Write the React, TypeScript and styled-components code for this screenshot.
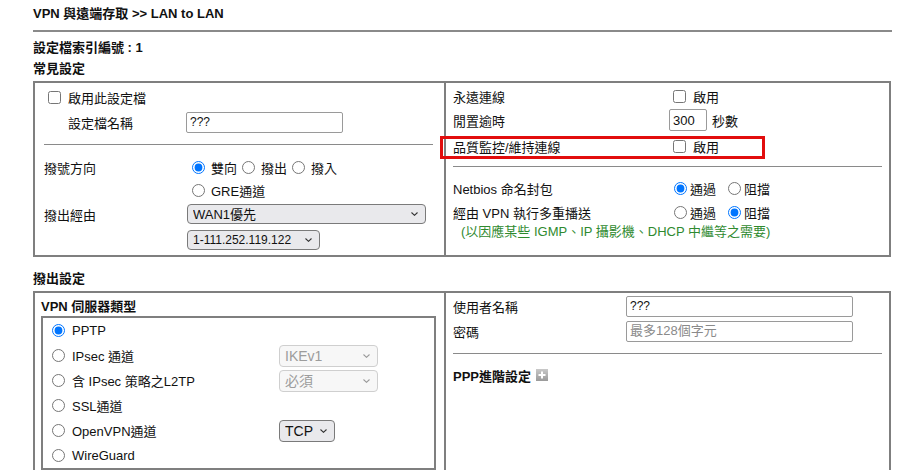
import React from 'react'
import styled, { createGlobalStyle } from 'styled-components'

const GlobalStyle = createGlobalStyle`
  body {
    margin: 0;
    background: #fff;
    color: #111;
    font-family: 'Liberation Sans', 'Noto Sans CJK TC', sans-serif;
    font-size: 13px;
  }
  * {
    box-sizing: border-box;
  }
`

const Page = styled.div`
  padding-left: 33px;
  width: 893px;
`
const Title = styled.div`
  height: 28px;
  line-height: 28px;
  font-weight: bold;
`
const Rule = styled.div`
  margin-top: 2px;
  height: 2px;
  background: #8a8a8a;
  width: 859px;
`
const SectionLabel = styled.div<{ $top: number }>`
  margin-top: ${({ $top }) => $top}px;
  height: 20px;
  line-height: 20px;
  font-weight: bold;
`
const Panel = styled.div`
  margin-top: 2px;
  display: grid;
  grid-template-columns: 411px 1fr;
  width: 858px;
  border: 2px solid #7f7f7f;
`
const Cell = styled.div<{ $pad: string; $divider?: boolean }>`
  padding: ${({ $pad }) => $pad};
  border-right: ${({ $divider }) => ($divider ? '2px solid #7f7f7f' : 'none')};
  display: flex;
  flex-direction: column;
`
const Row = styled.div<{ $cols?: string; $h?: number; $top?: number; $indent?: number }>`
  display: grid;
  grid-template-columns: ${({ $cols }) => $cols || '1fr'};
  align-items: center;
  height: ${({ $h }) => $h || 22}px;
  margin-top: ${({ $top }) => $top || 0}px;
  padding-left: ${({ $indent }) => $indent || 0}px;
  position: relative;
`
const Inline = styled.div`
  display: flex;
  align-items: center;
  white-space: nowrap;
`
const Divider = styled.div<{ $top: number; $bottom: number }>`
  height: 1px;
  background: #8a8a8a;
  margin: ${({ $top, $bottom }) => `${$top}px 0 ${$bottom}px`};
`
const Check = styled.input.attrs({ type: 'checkbox' })`
  width: 13px;
  height: 13px;
  margin: 0 7px 0 4px;
`
const Radio = styled.input.attrs({ type: 'radio' })<{ $gap?: number }>`
  width: 13px;
  height: 13px;
  margin: 0 ${({ $gap }) => ($gap ?? 6)}px 0 5px;
`
const TextBox = styled.input<{ $w: number }>`
  width: ${({ $w }) => $w}px;
  height: 21px;
  border: 1px solid #9a9a9a;
  border-radius: 2px;
  padding: 0 3px;
  font: inherit;
  font-size: 12px;
  color: #111;
  &::placeholder {
    color: #8a8a8a;
    font-size: 13px;
  }
`
const SelectWrap = styled.div<{ $w: number }>`
  position: relative;
  width: ${({ $w }) => $w}px;
`
const Select = styled.select<{ $h?: number; $fs?: number; $off?: boolean }>`
  appearance: none;
  -webkit-appearance: none;
  display: block;
  width: 100%;
  height: ${({ $h }) => $h || 20}px;
  font: inherit;
  font-size: ${({ $fs }) => $fs || 13}px;
  padding: 0 18px 0 5px;
  border: 1px solid ${({ $off }) => ($off ? '#cfcfcf' : '#7a7a7a')};
  border-radius: 4px;
  background: ${({ $off }) => ($off ? '#f7f7f7' : '#e9e9ec')};
  color: ${({ $off }) => ($off ? '#9c9c9c' : '#111')};
  opacity: 1;
`
const Chevron = styled.svg`
  position: absolute;
  right: 8px;
  top: 50%;
  margin-top: -2px;
  pointer-events: none;
`
const Note = styled.div`
  height: 18px;
  line-height: 18px;
  padding-left: 8px;
  color: #2f8a2f;
`
const Highlight = styled.div`
  position: absolute;
  left: -13px;
  top: 1px;
  width: 325px;
  height: 23px;
  border: 3px solid #e20d0d;
  pointer-events: none;
`
const TypeBox = styled.div`
  margin-top: 1px;
  border: 2px solid #7f7f7f;
  padding: 0 0 0 4px;
`
const Bold = styled.span`
  font-weight: bold;
`
const Opt = styled.span<{ $gap?: number }>`
  margin-right: ${({ $gap }) => $gap ?? 0}px;
`

const Dropdown = ({
  w,
  value,
  h,
  fs,
  off,
}: {
  w: number
  value: string
  h?: number
  fs?: number
  off?: boolean
}) => (
  <SelectWrap $w={w}>
    <Select $h={h} $fs={fs} $off={off} disabled={off} defaultValue={value}>
      <option>{value}</option>
    </Select>
    <Chevron width="7" height="4" viewBox="0 0 7 4">
      <path d="M0.5 0.5L3.5 3.3L6.5 0.5" fill="none" stroke={off ? '#9a9a9a' : '#333'} strokeWidth="1.1" />
    </Chevron>
  </SelectWrap>
)

const PlusIcon = () => (
  <svg width="12" height="12" viewBox="0 0 12 12" style={{ marginLeft: 5 }}>
    <defs>
      <linearGradient id="pg" x1="0" y1="0" x2="0" y2="1">
        <stop offset="0" stopColor="#c9c9c9" />
        <stop offset="1" stopColor="#9a9a9a" />
      </linearGradient>
    </defs>
    <rect x="0" y="0" width="12" height="12" fill="url(#pg)" />
    <path d="M6 2.5v7M2.5 6h7" stroke="#fff" strokeWidth="2" />
  </svg>
)

const vpnTypes = [
  { label: 'PPTP', checked: true },
  { label: 'IPsec 通道', select: 'IKEv1', w: 99, off: true },
  { label: '含 IPsec 策略之L2TP', select: '必須', w: 99, off: true },
  { label: 'SSL通道' },
  { label: 'OpenVPN通道', select: 'TCP', w: 56 },
  { label: 'WireGuard' },
]

export default function App() {
  return (
    <Page>
      <GlobalStyle />
      <Title>VPN 與遠端存取 &gt;&gt; LAN to LAN</Title>
      <Rule />
      <SectionLabel $top={6}>設定檔索引編號 : 1</SectionLabel>
      <SectionLabel $top={1}>常見設定</SectionLabel>
      <Panel>
        <Cell $pad="3px 11px 4px 9px" $divider>
          <Row>
            <Inline>
              <Check />
              <span>啟用此設定檔</span>
            </Inline>
          </Row>
          <Row $cols="118px 1fr" $h={24} $top={2} $indent={24}>
            <span>設定檔名稱</span>
            <TextBox $w={157} defaultValue="???" />
          </Row>
          <Divider $top={10} $bottom={11} />
          <Row $cols="143px 1fr">
            <span>撥號方向</span>
            <Inline>
              <Radio name="dir" defaultChecked />
              <Opt>雙向</Opt>
              <Radio name="dir" />
              <Opt>撥出</Opt>
              <Radio name="dir" />
              <Opt>撥入</Opt>
            </Inline>
          </Row>
          <Row $cols="143px 1fr" $top={1}>
            <span />
            <Inline>
              <Radio name="dir" />
              <Opt>GRE通道</Opt>
            </Inline>
          </Row>
          <Row $cols="143px 1fr" $top={2}>
            <span>撥出經由</span>
            <Dropdown w={239} value="WAN1優先" />
          </Row>
          <Row $cols="143px 1fr" $top={4}>
            <span />
            <Dropdown w={133} value="1-111.252.119.122" fs={12} />
          </Row>
        </Cell>
        <Cell $pad="2px 7px 0 7px">
          <Row $cols="216px 1fr">
            <span>永遠連線</span>
            <Inline>
              <Check />
              <span>啟用</span>
            </Inline>
          </Row>
          <Row $cols="216px 1fr" $top={2}>
            <span>閒置逾時</span>
            <Inline>
              <TextBox $w={38} defaultValue="300" style={{ height: 22, fontSize: 13 }} />
              <span style={{ marginLeft: 5 }}>秒數</span>
            </Inline>
          </Row>
          <Row $cols="216px 1fr" $top={4}>
            <span>品質監控/維持連線</span>
            <Inline>
              <Check />
              <span>啟用</span>
            </Inline>
            <Highlight />
          </Row>
          <Divider $top={9} $bottom={10} />
          <Row $cols="216px 1fr">
            <span>Netbios 命名封包</span>
            <Inline>
              <Radio name="nb" defaultChecked $gap={3} />
              <Opt $gap={7}>通過</Opt>
              <Radio name="nb" $gap={3} />
              <Opt>阻擋</Opt>
            </Inline>
          </Row>
          <Row $cols="216px 1fr" $top={2}>
            <span>經由 VPN 執行多重播送</span>
            <Inline>
              <Radio name="mc" $gap={3} />
              <Opt $gap={7}>通過</Opt>
              <Radio name="mc" defaultChecked $gap={3} />
              <Opt>阻擋</Opt>
            </Inline>
          </Row>
          <Note>(以因應某些 IGMP、IP 攝影機、DHCP 中繼等之需要)</Note>
        </Cell>
      </Panel>
      <SectionLabel $top={12}>撥出設定</SectionLabel>
      <Panel>
        <Cell $pad="2px 8px 40px 6px" $divider>
          <Row $h={20}>
            <Bold>VPN 伺服器類型</Bold>
          </Row>
          <TypeBox>
            {vpnTypes.map((t) => (
              <Row key={t.label} $cols="232px 1fr" $h={25}>
                <Inline>
                  <Radio name="vpn" defaultChecked={t.checked} $gap={7} />
                  <span>{t.label}</span>
                </Inline>
                {t.select ? <Dropdown w={t.w!} value={t.select} h={22} fs={14} off={t.off} /> : <span />}
              </Row>
            ))}
          </TypeBox>
        </Cell>
        <Cell $pad="2px 7px 0 7px">
          <Row $cols="173px 1fr">
            <span>使用者名稱</span>
            <TextBox $w={227} defaultValue="???" />
          </Row>
          <Row $cols="173px 1fr" $top={3}>
            <span>密碼</span>
            <TextBox $w={227} type="password" placeholder="最多128個字元" />
          </Row>
          <Divider $top={11} $bottom={10} />
          <Row>
            <Inline>
              <Bold>PPP進階設定</Bold>
              <PlusIcon />
            </Inline>
          </Row>
        </Cell>
      </Panel>
    </Page>
  )
}
